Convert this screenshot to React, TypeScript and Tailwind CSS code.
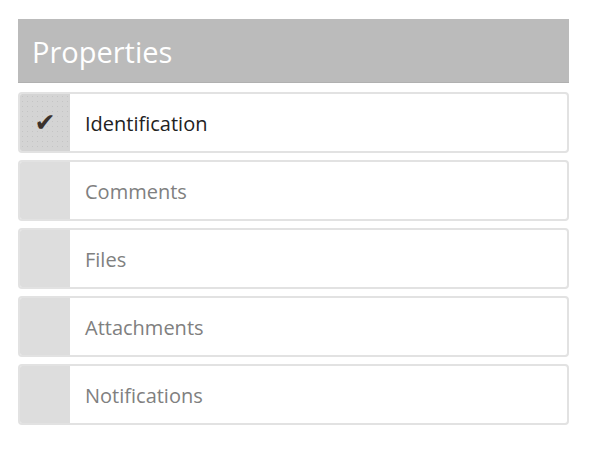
import { useState } from 'react';

const items = ['Identification', 'Comments', 'Files', 'Attachments', 'Notifications'];

export default function App() {
  const [selected, setSelected] = useState(0);

  return (
    <div className="w-[593px] h-[454px] bg-white pt-[19px] pl-[18px]" style={{ fontFamily: '"Open Sans", sans-serif' }}>
      <div className="w-[551px]">
        <div className="h-[64px] bg-[#bbbbbb] border-b border-[#b0b0b0] flex items-center pl-[14px]">
          <h2 className="text-[29px] text-white leading-none pt-[2px]">Properties</h2>
        </div>
        <div className="mt-[9px] flex flex-col gap-[7px]">
          {items.map((label, i) => {
            const active = i === selected;
            return (
              <div
                key={label}
                onClick={() => setSelected(i)}
                className="h-[61px] flex border-2 border-[#e2e2e2] rounded-[4px] overflow-hidden cursor-pointer"
              >
                <div
                  className={
                    active
                      ? 'w-[50px] shrink-0 flex items-center justify-center bg-[#d4d4d4] bg-[radial-gradient(#c4c4c4_0.6px,transparent_0.8px)] bg-[length:5px_5px]'
                      : 'w-[50px] shrink-0 bg-[#dddddd]'
                  }
                >
                  {active && <span className="text-[25px] text-[#3b322c] leading-none" style={{ fontFamily: '"DejaVu Sans", sans-serif' }}>✔</span>}
                </div>
                <div className={active ? 'flex items-center pl-[15px] pt-[2px] text-[20px] text-[#222222]' : 'flex items-center pl-[15px] pt-[2px] text-[20px] text-[#808080]'}>
                  {label}
                </div>
              </div>
            );
          })}
        </div>
      </div>
    </div>
  );
}
